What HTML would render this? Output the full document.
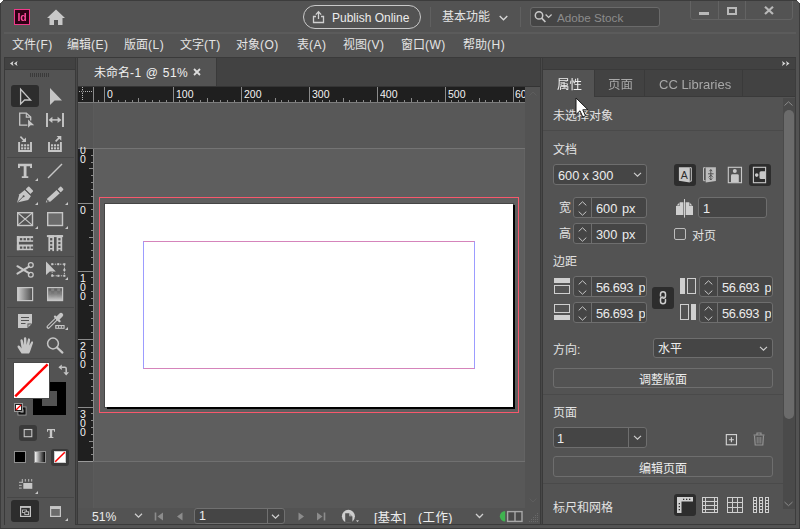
<!DOCTYPE html>
<html lang="zh-CN">
<head>
<meta charset="utf-8">
<title>Adobe InDesign</title>
<style>
html,body{margin:0;padding:0;background:#535353;}
body{width:800px;height:529px;overflow:hidden;position:relative;font-family:"Liberation Sans","Noto Sans CJK SC",sans-serif;}
#app{position:absolute;left:0;top:0;width:800px;height:529px;overflow:hidden;}
#app div,#app svg{position:absolute;box-sizing:border-box;}
#app svg{overflow:visible;display:block;}
.t{white-space:nowrap;}
</style>
</head>
<body>
<div id="app">
<div style="left:0px;top:0px;width:800px;height:529px;background:#3c3c3c;"></div>
<div style="left:1px;top:1px;width:798px;height:527px;background:#535353;"></div>
<div style="left:4px;top:32px;width:792px;height:2px;background:#5b5b5b;"></div>
<div style="left:4px;top:57px;width:792px;height:1px;background:#3a3a3a;"></div>
<div style="left:14px;top:9px;width:16px;height:16px;background:#2e0014;border:1px solid #f0388a;"></div>
<div class="t" style="left:14px;top:9px;font-size:10.5px;line-height:16px;height:16px;color:#ff4a9c;width:16px;text-align:center;font-weight:bold;letter-spacing:-0.2px;will-change:transform;">Id</div>
<svg style="left:46px;top:9px;" width="20" height="17" viewBox="0 0 20 17"><path d="M10 0.5 L19 9 H16.5 V16 H12 V11 H8 V16 H3.5 V9 H1 Z" fill="#c8c8c8"/></svg>
<div style="left:303px;top:5px;width:118px;height:24px;border:1px solid #c9c9c9;border-radius:12px;"></div>
<svg style="left:312px;top:10px;" width="14" height="14" viewBox="0 0 14 14"><path d="M4 6.5H1.5V12.5H11.5V6.5H9" fill="none" stroke="#d0d0d0" stroke-width="1.3"/><path d="M6.5 9V2.2M3.8 4.6L6.5 1.8L9.2 4.6" fill="none" stroke="#d0d0d0" stroke-width="1.3"/></svg>
<div class="t" style="left:332px;top:10px;font-size:12px;line-height:16px;height:16px;color:#ececec;">Publish Online</div>
<div style="left:430px;top:7px;width:1px;height:20px;background:#606060;"></div>
<div style="left:520px;top:7px;width:1px;height:20px;background:#606060;"></div>
<div class="t" style="left:442px;top:9px;font-size:12px;line-height:16px;height:16px;color:#e4e4e4;">基本功能</div>
<svg style="left:499px;top:15px;" width="9" height="6" viewBox="0 0 9 6"><path d="M0.7 1L4.5 4.8L8.3 1" fill="none" stroke="#d8d8d8" stroke-width="1.3"/></svg>
<div style="left:530px;top:7px;width:130px;height:20px;background:#454545;border:1px solid #6a6a6a;border-radius:3px;"></div>
<svg style="left:534px;top:10px;" width="20" height="14" viewBox="0 0 20 14"><circle cx="5" cy="5.4" r="3.7" fill="none" stroke="#c8c8c8" stroke-width="1.5"/><path d="M7.7 8.2L11.4 12" stroke="#c8c8c8" stroke-width="1.7"/><path d="M11.6 4.6L14.6 7.4L17.6 4.6" fill="none" stroke="#c8c8c8" stroke-width="1.3"/></svg>
<div class="t" style="left:557px;top:10px;font-size:11.7px;line-height:16px;height:16px;color:#8c8c8c;">Adobe Stock</div>
<div style="left:690px;top:-3px;width:103px;height:23px;border:1px solid #636363;border-radius:3px;"></div>
<div style="left:718px;top:1px;width:1px;height:18px;background:#636363;"></div>
<div style="left:745px;top:1px;width:1px;height:18px;background:#636363;"></div>
<div style="left:699px;top:12px;width:10px;height:3px;background:#b8b8b8;"></div>
<div style="left:727px;top:7px;width:10px;height:8px;border:2px solid #b8b8b8;"></div>
<svg style="left:764px;top:6px;" width="10" height="9" viewBox="0 0 10 9"><path d="M1 0.7L9 8M9 0.7L1 8" stroke="#b8b8b8" stroke-width="2.2"/></svg>
<div class="t" style="left:12px;top:37px;font-size:12px;line-height:16px;height:16px;color:#e4e4e4;">文件<span style="letter-spacing:0.5px">(F)</span></div>
<div class="t" style="left:67px;top:37px;font-size:12px;line-height:16px;height:16px;color:#e4e4e4;">编辑<span style="letter-spacing:0.5px">(E)</span></div>
<div class="t" style="left:124px;top:37px;font-size:12px;line-height:16px;height:16px;color:#e4e4e4;">版面<span style="letter-spacing:0.5px">(L)</span></div>
<div class="t" style="left:180px;top:37px;font-size:12px;line-height:16px;height:16px;color:#e4e4e4;">文字<span style="letter-spacing:0.5px">(T)</span></div>
<div class="t" style="left:236px;top:37px;font-size:12px;line-height:16px;height:16px;color:#e4e4e4;">对象<span style="letter-spacing:0.5px">(O)</span></div>
<div class="t" style="left:297px;top:37px;font-size:12px;line-height:16px;height:16px;color:#e4e4e4;">表<span style="letter-spacing:0.5px">(A)</span></div>
<div class="t" style="left:343px;top:37px;font-size:12px;line-height:16px;height:16px;color:#e4e4e4;">视图<span style="letter-spacing:0.5px">(V)</span></div>
<div class="t" style="left:401px;top:37px;font-size:12px;line-height:16px;height:16px;color:#e4e4e4;">窗口<span style="letter-spacing:0.5px">(W)</span></div>
<div class="t" style="left:463px;top:37px;font-size:12px;line-height:16px;height:16px;color:#e4e4e4;">帮助<span style="letter-spacing:0.5px">(H)</span></div>
<div style="left:0px;top:0px;width:800px;height:1px;background:#3c3c3c;"></div>
<div style="left:75px;top:58px;width:3px;height:466px;background:#3a3a3a;"></div>
<div style="left:76px;top:58px;width:1px;height:466px;background:#484848;"></div>
<div style="left:540px;top:58px;width:3px;height:466px;background:#3a3a3a;"></div>
<div style="left:541px;top:58px;width:1px;height:466px;background:#484848;"></div>
<div style="left:78px;top:58px;width:462px;height:29px;background:#424242;"></div>
<div style="left:78px;top:58px;width:138px;height:29px;background:#535353;"></div>
<div class="t" style="left:94px;top:65px;font-size:12px;line-height:16px;height:16px;color:#f0f0f0;">未命名<span style="letter-spacing:0.45px;word-spacing:0.5px">-1 @ 51%</span></div>
<svg style="left:193px;top:68px;" width="8" height="8" viewBox="0 0 8 8"><path d="M1 1L7 7M7 1L1 7" stroke="#dcdcdc" stroke-width="1.8"/></svg>
<div style="left:78px;top:87px;width:462px;height:421px;background:#5e5e5e;"></div>
<div style="left:78px;top:103px;width:447px;height:45px;background:#585858;"></div>
<div style="left:78px;top:103px;width:15px;height:45px;background:#555555;"></div>
<div style="left:93px;top:103px;width:1px;height:45px;background:#5b5b5b;"></div>
<div style="left:524px;top:149px;width:1px;height:312px;background:#636363;"></div>
<div style="left:78px;top:462px;width:447px;height:46px;background:#585858;"></div>
<div style="left:78px;top:462px;width:15px;height:46px;background:#555555;"></div>
<div style="left:93px;top:462px;width:1px;height:46px;background:#5b5b5b;"></div>
<div style="left:78px;top:86px;width:462px;height:1px;background:#343434;"></div>
<div style="left:216px;top:58px;width:1px;height:28px;background:#3a3a3a;"></div>
<div style="left:78px;top:87px;width:447px;height:15px;background:#1f1f1f;"></div>
<div style="left:78px;top:102px;width:447px;height:1px;background:#7d7d7d;"></div>
<div style="left:93px;top:87px;width:1px;height:15px;background:#8a8a8a;"></div>
<svg style="left:78px;top:87px;" width="15" height="15" viewBox="0 0 15 15"><path d="M1 4.5H14" stroke="#b5b5b5" stroke-width="1" stroke-dasharray="1 1"/><path d="M4.5 0V14" stroke="#b5b5b5" stroke-width="1" stroke-dasharray="1 1"/><path d="M3.5 4.5L4.5 3.5L5.5 4.5L4.5 5.5Z" fill="#1f1f1f" stroke="#9a9a9a" stroke-width="0.6"/></svg>
<svg style="left:78px;top:87px;" width="447" height="15" viewBox="0 0 447 15"><rect x="20" y="13" width="1" height="2" fill="#8a8a8a"/><rect x="26" y="0" width="1" height="15" fill="#8a8a8a"/><rect x="33" y="13" width="1" height="2" fill="#8a8a8a"/><rect x="40" y="13" width="1" height="2" fill="#8a8a8a"/><rect x="47" y="13" width="1" height="2" fill="#8a8a8a"/><rect x="54" y="13" width="1" height="2" fill="#8a8a8a"/><rect x="60" y="11" width="1" height="4" fill="#8a8a8a"/><rect x="67" y="13" width="1" height="2" fill="#8a8a8a"/><rect x="74" y="13" width="1" height="2" fill="#8a8a8a"/><rect x="81" y="13" width="1" height="2" fill="#8a8a8a"/><rect x="88" y="13" width="1" height="2" fill="#8a8a8a"/><rect x="95" y="0" width="1" height="15" fill="#8a8a8a"/><rect x="101" y="13" width="1" height="2" fill="#8a8a8a"/><rect x="108" y="13" width="1" height="2" fill="#8a8a8a"/><rect x="115" y="13" width="1" height="2" fill="#8a8a8a"/><rect x="122" y="13" width="1" height="2" fill="#8a8a8a"/><rect x="129" y="11" width="1" height="4" fill="#8a8a8a"/><rect x="135" y="13" width="1" height="2" fill="#8a8a8a"/><rect x="142" y="13" width="1" height="2" fill="#8a8a8a"/><rect x="149" y="13" width="1" height="2" fill="#8a8a8a"/><rect x="156" y="13" width="1" height="2" fill="#8a8a8a"/><rect x="163" y="0" width="1" height="15" fill="#8a8a8a"/><rect x="169" y="13" width="1" height="2" fill="#8a8a8a"/><rect x="176" y="13" width="1" height="2" fill="#8a8a8a"/><rect x="183" y="13" width="1" height="2" fill="#8a8a8a"/><rect x="190" y="13" width="1" height="2" fill="#8a8a8a"/><rect x="197" y="11" width="1" height="4" fill="#8a8a8a"/><rect x="203" y="13" width="1" height="2" fill="#8a8a8a"/><rect x="210" y="13" width="1" height="2" fill="#8a8a8a"/><rect x="217" y="13" width="1" height="2" fill="#8a8a8a"/><rect x="224" y="13" width="1" height="2" fill="#8a8a8a"/><rect x="231" y="0" width="1" height="15" fill="#8a8a8a"/><rect x="237" y="13" width="1" height="2" fill="#8a8a8a"/><rect x="244" y="13" width="1" height="2" fill="#8a8a8a"/><rect x="251" y="13" width="1" height="2" fill="#8a8a8a"/><rect x="258" y="13" width="1" height="2" fill="#8a8a8a"/><rect x="265" y="11" width="1" height="4" fill="#8a8a8a"/><rect x="271" y="13" width="1" height="2" fill="#8a8a8a"/><rect x="278" y="13" width="1" height="2" fill="#8a8a8a"/><rect x="285" y="13" width="1" height="2" fill="#8a8a8a"/><rect x="292" y="13" width="1" height="2" fill="#8a8a8a"/><rect x="299" y="0" width="1" height="15" fill="#8a8a8a"/><rect x="305" y="13" width="1" height="2" fill="#8a8a8a"/><rect x="312" y="13" width="1" height="2" fill="#8a8a8a"/><rect x="319" y="13" width="1" height="2" fill="#8a8a8a"/><rect x="326" y="13" width="1" height="2" fill="#8a8a8a"/><rect x="333" y="11" width="1" height="4" fill="#8a8a8a"/><rect x="339" y="13" width="1" height="2" fill="#8a8a8a"/><rect x="346" y="13" width="1" height="2" fill="#8a8a8a"/><rect x="353" y="13" width="1" height="2" fill="#8a8a8a"/><rect x="360" y="13" width="1" height="2" fill="#8a8a8a"/><rect x="367" y="0" width="1" height="15" fill="#8a8a8a"/><rect x="373" y="13" width="1" height="2" fill="#8a8a8a"/><rect x="380" y="13" width="1" height="2" fill="#8a8a8a"/><rect x="387" y="13" width="1" height="2" fill="#8a8a8a"/><rect x="394" y="13" width="1" height="2" fill="#8a8a8a"/><rect x="401" y="11" width="1" height="4" fill="#8a8a8a"/><rect x="407" y="13" width="1" height="2" fill="#8a8a8a"/><rect x="414" y="13" width="1" height="2" fill="#8a8a8a"/><rect x="421" y="13" width="1" height="2" fill="#8a8a8a"/><rect x="428" y="13" width="1" height="2" fill="#8a8a8a"/><rect x="435" y="0" width="1" height="15" fill="#8a8a8a"/><rect x="441" y="13" width="1" height="2" fill="#8a8a8a"/></svg>
<div class="t" style="left:107px;top:88px;font-size:10.5px;line-height:13px;height:13px;color:#f2f2f2;overflow:hidden;width:20px;">0</div>
<div class="t" style="left:176px;top:88px;font-size:10.5px;line-height:13px;height:13px;color:#f2f2f2;overflow:hidden;width:20px;">100</div>
<div class="t" style="left:244px;top:88px;font-size:10.5px;line-height:13px;height:13px;color:#f2f2f2;overflow:hidden;width:20px;">200</div>
<div class="t" style="left:312px;top:88px;font-size:10.5px;line-height:13px;height:13px;color:#f2f2f2;overflow:hidden;width:20px;">300</div>
<div class="t" style="left:380px;top:88px;font-size:10.5px;line-height:13px;height:13px;color:#f2f2f2;overflow:hidden;width:20px;">400</div>
<div class="t" style="left:448px;top:88px;font-size:10.5px;line-height:13px;height:13px;color:#f2f2f2;overflow:hidden;width:20px;">500</div>
<div class="t" style="left:515px;top:88px;font-size:10.5px;line-height:13px;height:13px;color:#f2f2f2;overflow:hidden;width:10px;">600</div>
<div style="left:78px;top:148px;width:447px;height:1px;background:#747474;"></div>
<div style="left:78px;top:461px;width:447px;height:1px;background:#707070;"></div>
<div style="left:78px;top:461px;width:15px;height:1px;background:#9a9a9a;"></div>
<div style="left:78px;top:149px;width:15px;height:312px;background:#1f1f1f;"></div>
<div style="left:93px;top:149px;width:1px;height:312px;background:#8a8a8a;"></div>
<svg style="left:78px;top:149px;" width="15" height="312" viewBox="0 0 15 312"><rect x="13" y="6" width="2" height="1" fill="#8a8a8a"/><rect x="13" y="13" width="2" height="1" fill="#8a8a8a"/><rect x="11" y="19" width="4" height="1" fill="#8a8a8a"/><rect x="13" y="26" width="2" height="1" fill="#8a8a8a"/><rect x="13" y="33" width="2" height="1" fill="#8a8a8a"/><rect x="13" y="40" width="2" height="1" fill="#8a8a8a"/><rect x="13" y="47" width="2" height="1" fill="#8a8a8a"/><rect x="0" y="54" width="15" height="1" fill="#8a8a8a"/><rect x="13" y="60" width="2" height="1" fill="#8a8a8a"/><rect x="13" y="67" width="2" height="1" fill="#8a8a8a"/><rect x="13" y="74" width="2" height="1" fill="#8a8a8a"/><rect x="13" y="81" width="2" height="1" fill="#8a8a8a"/><rect x="11" y="88" width="4" height="1" fill="#8a8a8a"/><rect x="13" y="94" width="2" height="1" fill="#8a8a8a"/><rect x="13" y="101" width="2" height="1" fill="#8a8a8a"/><rect x="13" y="108" width="2" height="1" fill="#8a8a8a"/><rect x="13" y="115" width="2" height="1" fill="#8a8a8a"/><rect x="0" y="122" width="15" height="1" fill="#8a8a8a"/><rect x="13" y="128" width="2" height="1" fill="#8a8a8a"/><rect x="13" y="135" width="2" height="1" fill="#8a8a8a"/><rect x="13" y="142" width="2" height="1" fill="#8a8a8a"/><rect x="13" y="149" width="2" height="1" fill="#8a8a8a"/><rect x="11" y="156" width="4" height="1" fill="#8a8a8a"/><rect x="13" y="162" width="2" height="1" fill="#8a8a8a"/><rect x="13" y="169" width="2" height="1" fill="#8a8a8a"/><rect x="13" y="176" width="2" height="1" fill="#8a8a8a"/><rect x="13" y="183" width="2" height="1" fill="#8a8a8a"/><rect x="0" y="190" width="15" height="1" fill="#8a8a8a"/><rect x="13" y="196" width="2" height="1" fill="#8a8a8a"/><rect x="13" y="203" width="2" height="1" fill="#8a8a8a"/><rect x="13" y="210" width="2" height="1" fill="#8a8a8a"/><rect x="13" y="217" width="2" height="1" fill="#8a8a8a"/><rect x="11" y="224" width="4" height="1" fill="#8a8a8a"/><rect x="13" y="230" width="2" height="1" fill="#8a8a8a"/><rect x="13" y="237" width="2" height="1" fill="#8a8a8a"/><rect x="13" y="244" width="2" height="1" fill="#8a8a8a"/><rect x="13" y="251" width="2" height="1" fill="#8a8a8a"/><rect x="0" y="258" width="15" height="1" fill="#8a8a8a"/><rect x="13" y="264" width="2" height="1" fill="#8a8a8a"/><rect x="13" y="271" width="2" height="1" fill="#8a8a8a"/><rect x="13" y="278" width="2" height="1" fill="#8a8a8a"/><rect x="13" y="285" width="2" height="1" fill="#8a8a8a"/><rect x="11" y="292" width="4" height="1" fill="#8a8a8a"/><rect x="13" y="298" width="2" height="1" fill="#8a8a8a"/><rect x="13" y="305" width="2" height="1" fill="#8a8a8a"/></svg>
<div style="left:78px;top:147px;width:15px;height:314px;overflow:hidden;"><div class="t" style="left:2px;top:-10px;font-size:10.5px;line-height:9px;height:9px;color:#f2f2f2;">1</div><div class="t" style="left:2px;top:-1px;font-size:10.5px;line-height:9px;height:9px;color:#f2f2f2;">0</div><div class="t" style="left:2px;top:8px;font-size:10.5px;line-height:9px;height:9px;color:#f2f2f2;">0</div><div class="t" style="left:2px;top:59px;font-size:10.5px;line-height:9px;height:9px;color:#f2f2f2;">0</div><div class="t" style="left:2px;top:127px;font-size:10.5px;line-height:9px;height:9px;color:#f2f2f2;">1</div><div class="t" style="left:2px;top:136px;font-size:10.5px;line-height:9px;height:9px;color:#f2f2f2;">0</div><div class="t" style="left:2px;top:145px;font-size:10.5px;line-height:9px;height:9px;color:#f2f2f2;">0</div><div class="t" style="left:2px;top:195px;font-size:10.5px;line-height:9px;height:9px;color:#f2f2f2;">2</div><div class="t" style="left:2px;top:204px;font-size:10.5px;line-height:9px;height:9px;color:#f2f2f2;">0</div><div class="t" style="left:2px;top:213px;font-size:10.5px;line-height:9px;height:9px;color:#f2f2f2;">0</div><div class="t" style="left:2px;top:263px;font-size:10.5px;line-height:9px;height:9px;color:#f2f2f2;">3</div><div class="t" style="left:2px;top:272px;font-size:10.5px;line-height:9px;height:9px;color:#f2f2f2;">0</div><div class="t" style="left:2px;top:281px;font-size:10.5px;line-height:9px;height:9px;color:#f2f2f2;">0</div></div>
<div style="left:525px;top:87px;width:15px;height:421px;background:#535353;"></div>
<svg style="left:529px;top:91px;" width="8" height="5" viewBox="0 0 8 5"><path d="M0.5 4.5L4 1L7.5 4.5" fill="none" stroke="#5d5d5d" stroke-width="1"/></svg>
<svg style="left:529px;top:498px;" width="8" height="5" viewBox="0 0 8 5"><path d="M0.5 0.5L4 4L7.5 0.5" fill="none" stroke="#5d5d5d" stroke-width="1"/></svg>
<div style="left:99px;top:197px;width:420px;height:216px;border:1px solid #f8586c;"></div>
<div style="left:104px;top:203px;width:410px;height:205px;background:#454545;"></div>
<div style="left:513px;top:205px;width:2px;height:204px;background:#000;"></div>
<div style="left:107px;top:407px;width:408px;height:2px;background:#000;"></div>
<div style="left:105px;top:204px;width:408px;height:203px;background:#fff;"></div>
<div style="left:143px;top:241px;width:332px;height:128px;border-top:1px solid #d584bb;border-bottom:1px solid #d584bb;border-left:1px solid #9c9cff;border-right:1px solid #9c9cff;"></div>
<div style="left:78px;top:508px;width:462px;height:16px;background:#535353;"></div>
<div class="t" style="left:92px;top:509px;font-size:12.2px;line-height:16px;height:16px;color:#ececec;">51%</div>
<svg style="left:134px;top:513px;" width="9" height="6" viewBox="0 0 9 6"><path d="M1 0.8L4.5 4.2L8 0.8" fill="none" stroke="#d0d0d0" stroke-width="1.2"/></svg>
<svg style="left:155px;top:512px;" width="10" height="9" viewBox="0 0 10 9"><path d="M0.5 0.5V8.5" stroke="#8c8c8c" stroke-width="1.6"/><path d="M8 0.5V8.5L2.5 4.5Z" fill="#8c8c8c"/></svg>
<svg style="left:176px;top:512px;" width="8" height="9" viewBox="0 0 8 9"><path d="M6.5 0.5V8.5L1 4.5Z" fill="#8c8c8c"/></svg>
<div style="left:194px;top:508px;width:91px;height:16px;background:#454545;border:1px solid #707070;border-radius:3px;"></div>
<div style="left:267px;top:509px;width:1px;height:14px;background:#707070;"></div>
<div class="t" style="left:199px;top:509px;font-size:12.5px;line-height:15px;height:15px;color:#ececec;">1</div>
<svg style="left:271px;top:514px;" width="9" height="6" viewBox="0 0 9 6"><path d="M1 0.8L4.5 4.2L8 0.8" fill="none" stroke="#d0d0d0" stroke-width="1.2"/></svg>
<svg style="left:297px;top:512px;" width="8" height="9" viewBox="0 0 8 9"><path d="M1.5 0.5V8.5L7 4.5Z" fill="#8c8c8c"/></svg>
<svg style="left:315px;top:512px;" width="10" height="9" viewBox="0 0 10 9"><path d="M9.5 0.5V8.5" stroke="#8c8c8c" stroke-width="1.6"/><path d="M2 0.5V8.5L7.5 4.5Z" fill="#8c8c8c"/></svg>
<svg style="left:340px;top:508px;" width="20" height="16" viewBox="340 508 20 16"><clipPath id="pfc"><rect x="340" y="508" width="20" height="14.3"/></clipPath><g clip-path="url(#pfc)"><circle cx="348.4" cy="516.3" r="6.5" fill="#cdcdcd"/><path d="M345.2 513.2H349L352.4 516.6V523H345.2Z" fill="#535353"/><path d="M349.3 513.6V516.3H352Z" fill="#cdcdcd"/><path d="M349.9 514.8V515.8H350.9Z" fill="#535353"/></g><path d="M356 520.2H359L357.5 522.2Z" fill="#c0c0c0"/></svg>
<div class="t" style="left:374px;top:509.5px;font-size:12.5px;line-height:16px;height:16px;color:#ececec;">[基本]</div>
<div class="t" style="left:418px;top:509.5px;font-size:12.5px;line-height:16px;height:16px;color:#ececec;letter-spacing:0.4px;">(工作)</div>
<svg style="left:475px;top:513px;" width="9" height="6" viewBox="0 0 9 6"><path d="M1 1L4.5 4.5L8 1" fill="none" stroke="#d0d0d0" stroke-width="1.3"/></svg>
<svg style="left:499px;top:509px;" width="25" height="15" viewBox="499 509 25 15"><path d="M505.2 510.9A5.3 5.3 0 0 0 505.2 521.6Z" fill="#3fb34f"/><rect x="507.6" y="511.6" width="14.4" height="9.8" fill="#4a4a4a" stroke="#a8a8a8" stroke-width="1.4"/><path d="M515 511.6V521.4" stroke="#a8a8a8" stroke-width="1.4"/></svg>
<svg style="left:528px;top:512px;" width="12" height="12" viewBox="0 0 12 12"><g fill="#6a6a6a"><rect x="9" y="1" width="1" height="1"/><rect x="7" y="3" width="1" height="1"/><rect x="9" y="3" width="1" height="1"/><rect x="5" y="5" width="1" height="1"/><rect x="7" y="5" width="1" height="1"/><rect x="9" y="5" width="1" height="1"/><rect x="3" y="7" width="1" height="1"/><rect x="5" y="7" width="1" height="1"/><rect x="7" y="7" width="1" height="1"/><rect x="9" y="7" width="1" height="1"/><rect x="1" y="9" width="1" height="1"/><rect x="3" y="9" width="1" height="1"/><rect x="5" y="9" width="1" height="1"/><rect x="7" y="9" width="1" height="1"/><rect x="9" y="9" width="1" height="1"/></g></svg>
<div style="left:75px;top:524px;width:721px;height:1px;background:#3a3a3a;"></div>
<div style="left:4px;top:58px;width:1px;height:467px;background:#3a3a3a;"></div>
<div style="left:5px;top:58px;width:70px;height:467px;background:#535353;"></div>
<div style="left:5px;top:58px;width:70px;height:11px;background:#424242;"></div>
<div style="left:5px;top:69px;width:70px;height:1px;background:#3a3a3a;"></div>
<svg style="left:10px;top:61px;" width="8" height="5" viewBox="0 0 8 5"><path d="M3.5 0L0 2.5L3.5 5L2.7 2.5ZM7.5 0L4 2.5L7.5 5L6.7 2.5Z" fill="#d8d8d8"/></svg>
<svg style="left:30px;top:73px;" width="20" height="4" viewBox="0 0 20 4"><rect x="0" y="0" width="1" height="4" fill="#3a3a3a"/><rect x="2" y="0" width="1" height="4" fill="#3a3a3a"/><rect x="4" y="0" width="1" height="4" fill="#3a3a3a"/><rect x="6" y="0" width="1" height="4" fill="#3a3a3a"/><rect x="8" y="0" width="1" height="4" fill="#3a3a3a"/><rect x="10" y="0" width="1" height="4" fill="#3a3a3a"/><rect x="12" y="0" width="1" height="4" fill="#3a3a3a"/><rect x="14" y="0" width="1" height="4" fill="#3a3a3a"/><rect x="16" y="0" width="1" height="4" fill="#3a3a3a"/><rect x="18" y="0" width="1" height="4" fill="#3a3a3a"/></svg>
<div style="left:7px;top:157px;width:67px;height:1px;background:#474747;"></div>
<div style="left:7px;top:256px;width:67px;height:1px;background:#474747;"></div>
<div style="left:7px;top:307px;width:67px;height:1px;background:#474747;"></div>
<div style="left:7px;top:358px;width:67px;height:1px;background:#474747;"></div>
<div style="left:7px;top:497px;width:67px;height:1px;background:#474747;"></div>
<div style="left:11px;top:85px;width:28px;height:22px;background:#2d2d2d;border-radius:3px;"></div>
<svg style="left:19px;top:87px;" width="14" height="19" viewBox="0 0 14 19"><path d="M1.6 2.2V17L5.6 13H11.6Z" fill="none" stroke="#c6c6c6" stroke-width="1.3" stroke-linejoin="miter"/></svg>
<svg style="left:49px;top:87px;" width="14" height="19" viewBox="0 0 14 19"><path d="M1 1V18L5.6 13.4H13Z" fill="#c6c6c6"/></svg>
<svg style="left:18px;top:111px;" width="18" height="18" viewBox="18 111 18 18"><path d="M27.4 125.1H19.7V113.1H26.3L30.7 117.1V120.4" fill="none" stroke="#c6c6c6" stroke-width="1.3"/><path d="M26.3 113.1V117.1H30.7" fill="none" stroke="#c6c6c6" stroke-width="1.1"/><path d="M28.1 119.4V127.7L30.5 125.3H34.2Z" fill="#c6c6c6"/></svg>
<svg style="left:45px;top:112px;" width="20" height="16" viewBox="45 112 20 16"><path d="M47 113V127M63 113V127" stroke="#c6c6c6" stroke-width="1.9"/><path d="M50.5 119.9H59.5" stroke="#c6c6c6" stroke-width="1.5"/><path d="M48.6 119.9L52.4 116.7V123.1ZM61.4 119.9L57.6 116.7V123.1Z" fill="#c6c6c6"/></svg>
<svg style="left:17px;top:135px;" width="18" height="18" viewBox="17 135 18 18"><path d="M19.1 142V151H31.0V142" fill="none" stroke="#c6c6c6" stroke-width="1.9"/><g fill="#c6c6c6"><rect x="21.1" y="144.3" width="2.1" height="2.1"/><rect x="21.1" y="147.3" width="2.1" height="2.1"/><rect x="24.1" y="144.3" width="2.1" height="2.1"/><rect x="24.1" y="147.3" width="2.1" height="2.1"/><rect x="27.1" y="144.3" width="2.1" height="2.1"/><rect x="27.1" y="147.3" width="2.1" height="2.1"/></g><path d="M20.4 136.6L24 140.2" stroke="#c6c6c6" stroke-width="1.6"/><path d="M26 137.4V142H21.4Z" fill="#c6c6c6"/></svg>
<svg style="left:47px;top:135px;" width="18" height="18" viewBox="47 135 18 18"><path d="M49 142V151H60.9V142" fill="none" stroke="#c6c6c6" stroke-width="1.9"/><g fill="#c6c6c6"><rect x="51" y="144.3" width="2.1" height="2.1"/><rect x="51" y="147.3" width="2.1" height="2.1"/><rect x="54" y="144.3" width="2.1" height="2.1"/><rect x="54" y="147.3" width="2.1" height="2.1"/><rect x="57" y="144.3" width="2.1" height="2.1"/><rect x="57" y="147.3" width="2.1" height="2.1"/></g><path d="M55.6 141.4L59.6 137.4" stroke="#c6c6c6" stroke-width="1.6"/><path d="M56.6 136H61.3V140.7Z" fill="#c6c6c6"/></svg>
<svg style="left:16px;top:162px;" width="20" height="18" viewBox="16 162 20 18"><path d="M18 163.8H32V168H30.1V166.2H26.5V176.3H28.3V177.9H21.8V176.3H23.7V166.2H19.9V168H18Z" fill="#c6c6c6"/></svg>
<svg style="left:35px;top:178px;" width="3" height="3" viewBox="0 0 3 3"><path d="M3 0V3H0Z" fill="#c6c6c6"/></svg>
<svg style="left:47px;top:163px;" width="16" height="16" viewBox="0 0 16 16"><path d="M1 15L15 1" stroke="#c6c6c6" stroke-width="1.5"/></svg>
<svg style="left:16px;top:186px;" width="18" height="18" viewBox="16 186 18 18"><path d="M17.1 202.6L19.4 194.2L24.8 189.9L31 196L28.2 200Z" fill="#c6c6c6"/><path d="M25.6 189.2L28.1 186.7Q28.7 186.3 29.3 186.8L32.9 190.4Q33.4 191 32.9 191.6L30.4 194Z" fill="#c6c6c6"/><path d="M24.3 188.9L31.2 195.8" stroke="#535353" stroke-width="0.9"/><path d="M17.6 202.1L23.2 196.6" stroke="#535353" stroke-width="0.9"/><circle cx="23.6" cy="196.2" r="1" fill="#535353"/></svg>
<svg style="left:35px;top:202px;" width="3" height="3" viewBox="0 0 3 3"><path d="M3 0V3H0Z" fill="#c6c6c6"/></svg>
<svg style="left:45px;top:186px;" width="19" height="18" viewBox="45 186 19 18"><path d="M45.8 202.6L47.6 198.2L56.6 189.9L59.8 193.2L50.6 201.6Z" fill="#c6c6c6"/><path d="M57.6 189.2L60.1 186.7Q60.7 186.3 61.3 186.8L63.1 188.7Q63.6 189.3 63.1 189.9L60.6 192.4Z" fill="#c6c6c6"/><path d="M56.5 189L60.8 193.3" stroke="#535353" stroke-width="0.9"/><path d="M47.4 199.4L49.5 201.4L47 201.9Z" fill="#535353"/></svg>
<svg style="left:65px;top:202px;" width="3" height="3" viewBox="0 0 3 3"><path d="M3 0V3H0Z" fill="#c6c6c6"/></svg>
<svg style="left:17px;top:212px;" width="16" height="14" viewBox="0 0 16 14"><rect x="0.7" y="0.7" width="14.8" height="12.8" fill="none" stroke="#c6c6c6" stroke-width="1.4"/><path d="M1 1L15.2 13.2M15.2 1L1 13.2" stroke="#c6c6c6" stroke-width="1.1"/></svg>
<svg style="left:35px;top:226px;" width="3" height="3" viewBox="0 0 3 3"><path d="M3 0V3H0Z" fill="#c6c6c6"/></svg>
<svg style="left:47px;top:212px;" width="16" height="14" viewBox="0 0 16 14"><rect x="0.7" y="0.7" width="14.8" height="12.8" fill="#6b6b6b" stroke="#c6c6c6" stroke-width="1.4"/></svg>
<svg style="left:65px;top:226px;" width="3" height="3" viewBox="0 0 3 3"><path d="M3 0V3H0Z" fill="#c6c6c6"/></svg>
<svg style="left:16px;top:235px;" width="18" height="17" viewBox="16 235 18 17"><rect x="16.9" y="236.1" width="2" height="14.1" fill="#c6c6c6"/><rect x="16.9" y="236.1" width="16.2" height="5.7" fill="#c6c6c6"/><rect x="19.9" y="238.1" width="2.4" height="2.2" fill="#535353"/><rect x="23.5" y="238.1" width="2.4" height="2.2" fill="#535353"/><rect x="27.1" y="238.1" width="2.4" height="2.2" fill="#535353"/><rect x="30.7" y="238.1" width="2.4" height="2.2" fill="#535353"/><rect x="16.9" y="244.5" width="16.2" height="5.7" fill="#c6c6c6"/><rect x="19.9" y="246.5" width="2.4" height="2.2" fill="#535353"/><rect x="23.5" y="246.5" width="2.4" height="2.2" fill="#535353"/><rect x="27.1" y="246.5" width="2.4" height="2.2" fill="#535353"/><rect x="30.7" y="246.5" width="2.4" height="2.2" fill="#535353"/></svg>
<svg style="left:46px;top:234px;" width="18" height="18" viewBox="46 234 18 18"><rect x="46.9" y="235.1" width="16.2" height="2" fill="#c6c6c6"/><rect x="48.4" y="235.1" width="5.6" height="16" fill="#c6c6c6"/><rect x="50.1" y="238.1" width="2.2" height="2.3" fill="#535353"/><rect x="50.1" y="241.9" width="2.2" height="2.3" fill="#535353"/><rect x="50.1" y="245.7" width="2.2" height="2.3" fill="#535353"/><rect x="50.1" y="249.5" width="2.2" height="2.3" fill="#535353"/><rect x="56.6" y="235.1" width="5.6" height="16" fill="#c6c6c6"/><rect x="58.300000000000004" y="238.1" width="2.2" height="2.3" fill="#535353"/><rect x="58.300000000000004" y="241.9" width="2.2" height="2.3" fill="#535353"/><rect x="58.300000000000004" y="245.7" width="2.2" height="2.3" fill="#535353"/><rect x="58.300000000000004" y="249.5" width="2.2" height="2.3" fill="#535353"/></svg>
<svg style="left:16px;top:261px;" width="19" height="18" viewBox="16 261 19 18"><circle cx="30.8" cy="265.1" r="2.4" fill="none" stroke="#c6c6c6" stroke-width="1.3"/><circle cx="30.8" cy="274.7" r="2.4" fill="none" stroke="#c6c6c6" stroke-width="1.3"/><path d="M29 266.6L17.4 273.6M29 273.2L17.4 266.2" stroke="#c6c6c6" stroke-width="2" stroke-linecap="round"/></svg>
<svg style="left:45px;top:260px;" width="22" height="18" viewBox="45 260 22 18"><path d="M46 261.4V275L49.8 271.4H55.8Z" fill="#c6c6c6"/><path d="M52.2 264.2H64.4V275.8H52.2V272" fill="none" stroke="#c6c6c6" stroke-width="1" stroke-dasharray="1.4 1.2"/><rect x="51.2" y="263.2" width="2" height="2" fill="#c6c6c6"/><rect x="57.3" y="263.2" width="2" height="2" fill="#c6c6c6"/><rect x="63.400000000000006" y="263.2" width="2" height="2" fill="#c6c6c6"/><rect x="63.400000000000006" y="269" width="2" height="2" fill="#c6c6c6"/><rect x="63.400000000000006" y="274.8" width="2" height="2" fill="#c6c6c6"/><rect x="57.3" y="274.8" width="2" height="2" fill="#c6c6c6"/><rect x="51.2" y="274.8" width="2" height="2" fill="#c6c6c6"/></svg>
<svg style="left:65px;top:277px;" width="3" height="3" viewBox="0 0 3 3"><path d="M3 0V3H0Z" fill="#c6c6c6"/></svg>
<svg style="left:17px;top:287px;" width="16" height="14" viewBox="0 0 16 14"><defs><linearGradient id="g1" x1="0" y1="0" x2="1" y2="0"><stop offset="0" stop-color="#cfcfcf"/><stop offset="1" stop-color="#4a4a4a"/></linearGradient><linearGradient id="g2" x1="0" y1="0" x2="0" y2="1"><stop offset="0" stop-color="#585858"/><stop offset="0.45" stop-color="#7a7a7a"/><stop offset="1" stop-color="#cacaca"/></linearGradient><linearGradient id="g3" x1="0" y1="0" x2="1" y2="0"><stop offset="0" stop-color="#ffffff"/><stop offset="1" stop-color="#000000"/></linearGradient></defs><rect x="0.6" y="0.6" width="15" height="13" fill="url(#g1)" stroke="#c6c6c6" stroke-width="1.2"/></svg>
<svg style="left:47px;top:287px;" width="16" height="14" viewBox="0 0 16 14"><rect x="0.6" y="0.6" width="15" height="13" fill="url(#g2)" stroke="#c6c6c6" stroke-width="1.2"/><rect x="4.2" y="1.2" width="3" height="3" fill="#8a8a8a" opacity="0.75"/><rect x="10.2" y="1.2" width="3" height="3" fill="#8a8a8a" opacity="0.75"/><rect x="1.2" y="4.2" width="3" height="3" fill="#8a8a8a" opacity="0.47"/><rect x="7.2" y="4.2" width="3" height="3" fill="#8a8a8a" opacity="0.47"/><rect x="13.2" y="4.2" width="1.6" height="3" fill="#8a8a8a" opacity="0.47"/><rect x="4.2" y="7.2" width="3" height="3" fill="#8a8a8a" opacity="0.18999999999999995"/><rect x="10.2" y="7.2" width="3" height="3" fill="#8a8a8a" opacity="0.18999999999999995"/></svg>
<svg style="left:18px;top:314px;" width="14" height="14" viewBox="0 0 14 14"><path d="M0 0H14V9.5L9.5 14H0Z" fill="#c6c6c6"/><path d="M3 3.5H11M3 6.5H11M3 9.5H7.5" stroke="#535353" stroke-width="1.2"/><path d="M9.5 14V9.5H14Z" fill="#535353"/><path d="M10.4 13V10.4H13Z" fill="#c6c6c6"/></svg>
<svg style="left:45px;top:311px;" width="22" height="20" viewBox="45 311 22 20"><path d="M48.3 327L56.4 318.9" stroke="#c6c6c6" stroke-width="3.6" stroke-linecap="round"/><path d="M48.5 326.8L56.6 318.7" stroke="#535353" stroke-width="1.5" stroke-linecap="round"/><path d="M55 316.6L59.6 321.2" stroke="#c6c6c6" stroke-width="2.2" stroke-linecap="round"/><path d="M57.8 318.2L61 315" stroke="#c6c6c6" stroke-width="4.4" stroke-linecap="round"/><rect x="55.2" y="325" width="9.4" height="3.8" fill="#c6c6c6"/><g fill="#535353"><rect x="56.4" y="326.1" width="1.7" height="1.7"/><rect x="59.1" y="326.1" width="1.7" height="1.7"/><rect x="61.8" y="326.1" width="1.7" height="1.7"/></g></svg>
<svg style="left:65px;top:327px;" width="3" height="3" viewBox="0 0 3 3"><path d="M3 0V3H0Z" fill="#c6c6c6"/></svg>
<svg style="left:16.5px;top:337px;" width="17" height="17" viewBox="0 0 17 17"><path d="M4.6 16.5Q2.5 13.5 0.6 10.2Q0.2 8.9 1.3 8.6Q2.4 8.5 3.2 9.6L4.6 11.4L3.4 3.6Q3.3 2.3 4.4 2.2Q5.5 2.2 5.8 3.5L6.9 8L6.9 1.4Q7 0.2 8.1 0.2Q9.2 0.2 9.3 1.4L9.6 8L10.9 2.3Q11.2 1.2 12.2 1.4Q13.2 1.7 13.1 2.9L12.3 8.6L14.2 4.9Q14.8 4 15.6 4.4Q16.4 4.9 16 6L13.6 13Q13 15 12 16.5Z" fill="#c6c6c6"/></svg>
<svg style="left:46px;top:337px;" width="18" height="17" viewBox="0 0 18 17"><circle cx="7" cy="6.5" r="5.4" fill="none" stroke="#c6c6c6" stroke-width="1.5"/><path d="M11 10.5L16.4 15.6" stroke="#c6c6c6" stroke-width="2.2" stroke-linecap="round"/></svg>
<div style="left:33px;top:382px;width:33px;height:33px;background:#000;"></div>
<div style="left:42px;top:391px;width:15px;height:15px;background:#535353;"></div>
<div style="left:13px;top:362px;width:37px;height:37px;background:#4a4a4a;"></div>
<div style="left:14px;top:363px;width:35px;height:35px;background:#fff;"></div>
<svg style="left:14px;top:363px;" width="35" height="35" viewBox="0 0 35 35"><path d="M1.2 33.4L33.6 1.4" stroke="#ff0000" stroke-width="2.4"/></svg>
<svg style="left:58px;top:364px;" width="11" height="12" viewBox="0 0 11 12"><path d="M3.5 3.2H6.8Q8.2 3.2 8.2 4.6V8.6" fill="none" stroke="#c6c6c6" stroke-width="1.5"/><path d="M0.4 3.2L3.8 0.4V6Z M8.2 11.6L5.4 8.2H11Z" fill="#c6c6c6"/></svg>
<svg style="left:14px;top:403px;" width="13" height="13" viewBox="14 403 13 13"><rect x="18" y="407" width="8" height="8" fill="none" stroke="#9a9a9a" stroke-width="1"/><rect x="19.5" y="408.5" width="5" height="5" fill="#b8b8b8" stroke="#111" stroke-width="2"/><rect x="14.5" y="403.5" width="8" height="8" fill="#222" stroke="#9a9a9a" stroke-width="1"/><rect x="16" y="405" width="5" height="5" fill="#fff"/><path d="M16 410L21 405" stroke="#ff0000" stroke-width="1.2"/></svg>
<div style="left:19px;top:425px;width:18px;height:16px;background:#3a3a3a;border-radius:3px;"></div>
<svg style="left:23px;top:428px;" width="10" height="10" viewBox="23 428 10 10"><rect x="24.2" y="429.5" width="7.6" height="7.2" fill="#484848" stroke="#c6c6c6" stroke-width="1.1"/></svg>
<svg style="left:46px;top:428px;" width="10" height="11" viewBox="46 428 10 11"><path d="M47 429H55V431.8H54V430.2H52.2V437H53.4V438.1H48.6V437H49.8V430.2H48V431.8H47Z" fill="#c6c6c6"/></svg>
<div style="left:14px;top:451px;width:12px;height:12px;background:#000;border:1px solid #8f8f8f;"></div>
<svg style="left:34px;top:451px;" width="12" height="12" viewBox="0 0 12 12"><defs><linearGradient id="h1" x1="0" y1="0" x2="1" y2="0"><stop offset="0" stop-color="#cfcfcf"/><stop offset="1" stop-color="#4a4a4a"/></linearGradient><linearGradient id="h2" x1="0" y1="0" x2="0" y2="1"><stop offset="0" stop-color="#585858"/><stop offset="0.45" stop-color="#7a7a7a"/><stop offset="1" stop-color="#cacaca"/></linearGradient><linearGradient id="h3" x1="0" y1="0" x2="1" y2="0"><stop offset="0" stop-color="#ffffff"/><stop offset="1" stop-color="#000000"/></linearGradient></defs><rect x="0.5" y="0.5" width="11" height="11" fill="url(#h3)" stroke="#8f8f8f" stroke-width="1"/></svg>
<div style="left:51px;top:449px;width:18px;height:17px;background:#3a3a3a;border-radius:3px;"></div>
<div style="left:54px;top:451px;width:12px;height:12px;background:#fff;border:1px solid #cfcfcf;"></div>
<svg style="left:54px;top:451px;" width="12" height="12" viewBox="0 0 12 12"><path d="M1.2 10.8L10.8 1.2" stroke="#ff0000" stroke-width="1.5"/></svg>
<svg style="left:18px;top:478px;" width="16" height="12" viewBox="18 478 16 12"><rect x="23.3" y="483" width="9" height="5.8" fill="#c6c6c6"/><path d="M22.3 479V482.8M25.3 479V481.6M28.7 479V481.6M31.7 479V481.6" stroke="#c6c6c6" stroke-width="0.9"/><path d="M19 482.3H22.8M19 485.3H21.7M19 488.1H21.7" stroke="#c6c6c6" stroke-width="0.9"/></svg>
<svg style="left:35px;top:491px;" width="3" height="3" viewBox="0 0 3 3"><path d="M3 0V3H0Z" fill="#c6c6c6"/></svg>
<div style="left:11px;top:500px;width:28px;height:22px;background:#2d2d2d;border-radius:3px;"></div>
<svg style="left:19px;top:505px;" width="14" height="13" viewBox="19 505 14 13"><rect x="20.6" y="506.8" width="9.8" height="9.6" fill="none" stroke="#c6c6c6" stroke-width="1.2"/><path d="M20 507H31" stroke="#c6c6c6" stroke-width="1.6"/><rect x="22.6" y="510" width="3.8" height="2.6" fill="#0a0a0a" stroke="#c6c6c6" stroke-width="0.9"/><rect x="24.8" y="511.8" width="3.8" height="2.8" fill="#2d2d2d" stroke="#c6c6c6" stroke-width="0.9"/></svg>
<svg style="left:49px;top:505px;" width="14" height="13" viewBox="49 505 14 13"><rect x="50.6" y="506.8" width="9.8" height="9.6" fill="#6b6b6b" stroke="#c6c6c6" stroke-width="1.2"/><rect x="50" y="506.2" width="11" height="2.8" fill="#c6c6c6"/></svg>
<svg style="left:65px;top:518px;" width="3" height="3" viewBox="0 0 3 3"><path d="M3 0V3H0Z" fill="#c6c6c6"/></svg>
<div style="left:543px;top:58px;width:253px;height:466px;background:#535353;"></div>
<div style="left:543px;top:58px;width:253px;height:11px;background:#424242;"></div>
<div style="left:543px;top:69px;width:253px;height:1px;background:#3a3a3a;"></div>
<div style="left:543px;top:70px;width:253px;height:27px;background:#424242;"></div>
<div style="left:543px;top:96px;width:253px;height:1px;background:#3a3a3a;"></div>
<div style="left:543px;top:70px;width:51px;height:27px;background:#535353;"></div>
<div style="left:594px;top:70px;width:1px;height:26px;background:#3a3a3a;"></div>
<div style="left:644px;top:70px;width:1px;height:26px;background:#3a3a3a;"></div>
<div style="left:742px;top:70px;width:1px;height:26px;background:#3a3a3a;"></div>
<svg style="left:782px;top:61px;" width="8" height="5" viewBox="0 0 8 5"><path d="M0 0L3.5 2.5L0 5L0.8 2.5ZM4 0L7.5 2.5L4 5L4.8 2.5Z" fill="#d8d8d8"/></svg>
<div style="left:795px;top:58px;width:1px;height:467px;background:#3d3d3d;"></div>
<div class="t" style="left:557px;top:76px;font-size:12.5px;line-height:18px;height:18px;color:#f0f0f0;will-change:transform;">属性</div>
<div class="t" style="left:607.5px;top:76px;font-size:12.5px;line-height:18px;height:18px;color:#a8a8a8;will-change:transform;">页面</div>
<div class="t" style="left:658.5px;top:76px;font-size:13px;line-height:18px;height:18px;color:#a8a8a8;will-change:transform;">CC Libraries</div>
<div style="left:783px;top:98px;width:12px;height:411px;background:#4a4a4a;"></div>
<div style="left:784px;top:110px;width:10px;height:309px;background:#6b6b6b;border-radius:5px;"></div>
<svg style="left:784px;top:101px;" width="9" height="6" viewBox="0 0 9 6"><path d="M0.5 4.5L4.5 0.8L8.5 4.5" fill="none" stroke="#8a8a8a" stroke-width="1"/></svg>
<svg style="left:784px;top:500.5px;" width="9" height="6" viewBox="0 0 9 6"><path d="M0.5 1L4.5 4.7L8.5 1" fill="none" stroke="#8a8a8a" stroke-width="1"/></svg>
<div style="left:543px;top:130px;width:240px;height:1px;background:#4a4a4a;"></div>
<div style="left:543px;top:394px;width:240px;height:1px;background:#4a4a4a;"></div>
<div style="left:543px;top:483px;width:240px;height:1px;background:#4a4a4a;"></div>
<div class="t" style="left:553px;top:108px;font-size:12px;line-height:16px;height:16px;color:#e2e2e2;">未选择对象</div>
<div class="t" style="left:553px;top:142px;font-size:12px;line-height:16px;height:16px;color:#e2e2e2;">文档</div>
<div class="t" style="left:553px;top:254px;font-size:12px;line-height:16px;height:16px;color:#e2e2e2;">边距</div>
<div class="t" style="left:553px;top:342px;font-size:12px;line-height:16px;height:16px;color:#e2e2e2;">方向:</div>
<div class="t" style="left:553px;top:405px;font-size:12px;line-height:16px;height:16px;color:#e2e2e2;">页面</div>
<div class="t" style="left:553px;top:500px;font-size:12px;line-height:16px;height:16px;color:#e2e2e2;">标尺和网格</div>
<div class="t" style="left:559px;top:200px;font-size:12px;line-height:16px;height:16px;color:#e2e2e2;">宽</div>
<div class="t" style="left:559px;top:226px;font-size:12px;line-height:16px;height:16px;color:#e2e2e2;">高</div>
<div class="t" style="left:692px;top:228px;font-size:12px;line-height:16px;height:16px;color:#e2e2e2;">对页</div>
<div style="left:553px;top:164px;width:94px;height:21px;background:#454545;border:1px solid #6e6e6e;border-radius:3px;overflow:hidden;"></div>
<div class="t" style="left:558px;top:168px;font-size:12.8px;line-height:16px;height:16px;color:#ececec;word-spacing:-0.4px;">600 x 300</div>
<svg style="left:633px;top:172px;" width="9" height="5" viewBox="0 0 9 5"><path d="M1 0.8L4.5 4.2L8 0.8" fill="none" stroke="#d0d0d0" stroke-width="1.1"/></svg>
<div style="left:674px;top:164px;width:22px;height:22px;background:#2d2d2d;border-radius:3px;"></div>
<div style="left:749px;top:164px;width:22px;height:22px;background:#2d2d2d;border-radius:3px;"></div>
<svg style="left:670px;top:160px;" width="105" height="30" viewBox="670 160 105 30"><path d="M678.9 167.2H689.8V182.6L678.9 180.8Z" fill="#c9c9c9"/><path d="M689.8 167.7H691.3V181.2H689.8" fill="none" stroke="#c9c9c9" stroke-width="1"/><text x="684.3" y="178.5" font-size="10.5" text-anchor="middle" font-family="Liberation Sans, sans-serif" fill="#2d2d2d">A</text><path d="M705.5 167.7H703.5V180.7H705.5" fill="none" stroke="#bdbdbd" stroke-width="1"/><path d="M705.7 167.2H715.9V181L705.7 182.6Z" fill="#bdbdbd"/><path d="M710.8 169.6V179.8M708 173.8H713.6M708.6 177.4L710.8 175L713 177.4M709.4 171.2L710.8 169.6L712.2 171.2M709.4 178.4L710.8 180L712.2 178.4" fill="none" stroke="#4a4a4a" stroke-width="0.9"/><rect x="728.3" y="167.3" width="13.2" height="15.4" fill="none" stroke="#c9c9c9" stroke-width="1.1"/><circle cx="734.8" cy="170.9" r="2" fill="#c9c9c9"/><path d="M731 182.2V175.6Q731 174.2 732.4 174.2H737.4Q738.8 174.2 738.8 175.6V182.2Z" fill="#c9c9c9"/><rect x="753.4" y="167.3" width="12.2" height="15.4" fill="none" stroke="#c9c9c9" stroke-width="1.1"/><circle cx="756.7" cy="175.1" r="1.8" fill="#c9c9c9"/><path d="M765.4 171.2H761Q759.5 171.2 759.5 172.7V177.5Q759.5 179 761 179H765.4Z" fill="#c9c9c9"/></svg>
<div style="left:573px;top:197px;width:74px;height:21px;background:#454545;border:1px solid #6e6e6e;border-radius:3px;overflow:hidden;"></div><div style="left:591px;top:198px;width:1px;height:19px;background:#6e6e6e;"></div><svg style="left:578px;top:200.5px;" width="9" height="5" viewBox="0 0 9 5"><path d="M0.7 4.4L4.5 0.8L8.3 4.4" fill="none" stroke="#c8c8c8" stroke-width="1"/></svg><svg style="left:578px;top:210.5px;" width="9" height="5" viewBox="0 0 9 5"><path d="M0.7 0.6L4.5 4.2L8.3 0.6" fill="none" stroke="#c8c8c8" stroke-width="1"/></svg><div class="t" style="left:596px;top:201px;width:48.5px;height:16px;overflow:hidden;font-size:12.8px;line-height:16px;color:#ececec;word-spacing:1px;letter-spacing:0px;">600 px</div>
<div style="left:573px;top:223px;width:74px;height:21px;background:#454545;border:1px solid #6e6e6e;border-radius:3px;overflow:hidden;"></div><div style="left:591px;top:224px;width:1px;height:19px;background:#6e6e6e;"></div><svg style="left:578px;top:226.5px;" width="9" height="5" viewBox="0 0 9 5"><path d="M0.7 4.4L4.5 0.8L8.3 4.4" fill="none" stroke="#c8c8c8" stroke-width="1"/></svg><svg style="left:578px;top:236.5px;" width="9" height="5" viewBox="0 0 9 5"><path d="M0.7 0.6L4.5 4.2L8.3 0.6" fill="none" stroke="#c8c8c8" stroke-width="1"/></svg><div class="t" style="left:596px;top:227px;width:48.5px;height:16px;overflow:hidden;font-size:12.8px;line-height:16px;color:#ececec;word-spacing:1px;letter-spacing:0px;">300 px</div>
<svg style="left:675px;top:198px;" width="20" height="21" viewBox="675 198 20 21"><path d="M679.7 202.2H683.4V215H676V205.9H679.7Z" fill="#cfcfcf"/><path d="M679.3 202.8V205.5H676.6Z" fill="#cfcfcf"/><path d="M689.3 202.2H685.6V215H693V205.9H689.3Z" fill="#cfcfcf"/><path d="M689.7 202.8V205.5H692.4Z" fill="#cfcfcf"/><path d="M684.5 199V217.6" stroke="#cfcfcf" stroke-width="1"/></svg>
<div style="left:698px;top:197px;width:69px;height:21px;background:#454545;border:1px solid #6e6e6e;border-radius:3px;overflow:hidden;"></div>
<div class="t" style="left:703px;top:201px;font-size:12.8px;line-height:16px;height:16px;color:#ececec;">1</div>
<div style="left:674px;top:228px;width:12px;height:12px;border:1px solid #bdbdbd;border-radius:2px;"></div>
<svg style="left:553px;top:277px;" width="18" height="18" viewBox="0 0 18 18"><rect x="1" y="1" width="16" height="5" fill="#cfcfcf"/><rect x="1.5" y="8.5" width="15" height="8" fill="none" stroke="#cfcfcf" stroke-width="1"/></svg>
<svg style="left:553px;top:303px;" width="18" height="18" viewBox="0 0 18 18"><rect x="1.5" y="1.5" width="15" height="8" fill="none" stroke="#cfcfcf" stroke-width="1"/><rect x="1" y="12" width="16" height="5" fill="#cfcfcf"/></svg>
<div style="left:573px;top:276px;width:74px;height:21px;background:#454545;border:1px solid #6e6e6e;border-radius:3px;overflow:hidden;"></div><div style="left:591px;top:277px;width:1px;height:19px;background:#6e6e6e;"></div><svg style="left:578px;top:279.5px;" width="9" height="5" viewBox="0 0 9 5"><path d="M0.7 4.4L4.5 0.8L8.3 4.4" fill="none" stroke="#c8c8c8" stroke-width="1"/></svg><svg style="left:578px;top:289.5px;" width="9" height="5" viewBox="0 0 9 5"><path d="M0.7 0.6L4.5 4.2L8.3 0.6" fill="none" stroke="#c8c8c8" stroke-width="1"/></svg><div class="t" style="left:596px;top:280px;width:48.5px;height:16px;overflow:hidden;font-size:12.8px;line-height:16px;color:#ececec;word-spacing:2.3px;letter-spacing:-0.35px;">56.693 px</div>
<div style="left:573px;top:302px;width:74px;height:21px;background:#454545;border:1px solid #6e6e6e;border-radius:3px;overflow:hidden;"></div><div style="left:591px;top:303px;width:1px;height:19px;background:#6e6e6e;"></div><svg style="left:578px;top:305.5px;" width="9" height="5" viewBox="0 0 9 5"><path d="M0.7 4.4L4.5 0.8L8.3 4.4" fill="none" stroke="#c8c8c8" stroke-width="1"/></svg><svg style="left:578px;top:315.5px;" width="9" height="5" viewBox="0 0 9 5"><path d="M0.7 0.6L4.5 4.2L8.3 0.6" fill="none" stroke="#c8c8c8" stroke-width="1"/></svg><div class="t" style="left:596px;top:306px;width:48.5px;height:16px;overflow:hidden;font-size:12.8px;line-height:16px;color:#ececec;word-spacing:2.3px;letter-spacing:-0.35px;">56.693 px</div>
<div style="left:652px;top:287px;width:22px;height:22px;background:#2d2d2d;border-radius:3px;"></div>
<svg style="left:656px;top:289px;" width="14" height="18" viewBox="656 289 14 18"><path d="M660.5 296V294.2A2.5 2.5 0 0 1 665.5 294.2V295.8A2.5 2.5 0 0 1 663 298.3" fill="none" stroke="#cfcfcf" stroke-width="1.5" stroke-linecap="round"/><path d="M665.5 299.4V301.2A2.5 2.5 0 0 1 660.5 301.2V299.6A2.5 2.5 0 0 1 663 297.1" fill="none" stroke="#cfcfcf" stroke-width="1.5" stroke-linecap="round"/></svg>
<svg style="left:679px;top:277px;" width="18" height="18" viewBox="0 0 18 18"><rect x="1" y="1" width="5" height="16" fill="#cfcfcf"/><rect x="8.5" y="1.5" width="8" height="15" fill="none" stroke="#cfcfcf" stroke-width="1"/></svg>
<svg style="left:679px;top:303px;" width="18" height="18" viewBox="0 0 18 18"><rect x="1.5" y="1.5" width="8" height="15" fill="none" stroke="#cfcfcf" stroke-width="1"/><rect x="12" y="1" width="5" height="16" fill="#cfcfcf"/></svg>
<div style="left:699px;top:276px;width:74px;height:21px;background:#454545;border:1px solid #6e6e6e;border-radius:3px;overflow:hidden;"></div><div style="left:717px;top:277px;width:1px;height:19px;background:#6e6e6e;"></div><svg style="left:704px;top:279.5px;" width="9" height="5" viewBox="0 0 9 5"><path d="M0.7 4.4L4.5 0.8L8.3 4.4" fill="none" stroke="#c8c8c8" stroke-width="1"/></svg><svg style="left:704px;top:289.5px;" width="9" height="5" viewBox="0 0 9 5"><path d="M0.7 0.6L4.5 4.2L8.3 0.6" fill="none" stroke="#c8c8c8" stroke-width="1"/></svg><div class="t" style="left:722px;top:280px;width:48.5px;height:16px;overflow:hidden;font-size:12.8px;line-height:16px;color:#ececec;word-spacing:2.3px;letter-spacing:-0.35px;">56.693 px</div>
<div style="left:699px;top:302px;width:74px;height:21px;background:#454545;border:1px solid #6e6e6e;border-radius:3px;overflow:hidden;"></div><div style="left:717px;top:303px;width:1px;height:19px;background:#6e6e6e;"></div><svg style="left:704px;top:305.5px;" width="9" height="5" viewBox="0 0 9 5"><path d="M0.7 4.4L4.5 0.8L8.3 4.4" fill="none" stroke="#c8c8c8" stroke-width="1"/></svg><svg style="left:704px;top:315.5px;" width="9" height="5" viewBox="0 0 9 5"><path d="M0.7 0.6L4.5 4.2L8.3 0.6" fill="none" stroke="#c8c8c8" stroke-width="1"/></svg><div class="t" style="left:722px;top:306px;width:48.5px;height:16px;overflow:hidden;font-size:12.8px;line-height:16px;color:#ececec;word-spacing:2.3px;letter-spacing:-0.35px;">56.693 px</div>
<div style="left:653px;top:338px;width:120px;height:20px;background:#454545;border:1px solid #6e6e6e;border-radius:3px;overflow:hidden;"></div>
<div class="t" style="left:658px;top:341px;font-size:12px;line-height:17px;height:17px;color:#ececec;">水平</div>
<svg style="left:759px;top:346px;" width="9" height="5" viewBox="0 0 9 5"><path d="M1 0.8L4.5 4.2L8 0.8" fill="none" stroke="#d0d0d0" stroke-width="1.1"/></svg>
<div style="left:553px;top:368px;width:220px;height:20px;border:1px solid #6e6e6e;border-radius:3px;"></div>
<div class="t" style="left:553px;top:372px;font-size:12px;line-height:16px;height:16px;color:#ececec;width:220px;text-align:center;">调整版面</div>
<div style="left:553px;top:456px;width:220px;height:21px;border:1px solid #6e6e6e;border-radius:3px;"></div>
<div class="t" style="left:553px;top:461px;font-size:12px;line-height:16px;height:16px;color:#ececec;width:220px;text-align:center;">编辑页面</div>
<div style="left:553px;top:427px;width:94px;height:21px;background:#454545;border:1px solid #6e6e6e;border-radius:3px;overflow:hidden;"></div>
<div style="left:628px;top:428px;width:1px;height:19px;background:#6e6e6e;"></div>
<div class="t" style="left:557px;top:431px;font-size:12.8px;line-height:16px;height:16px;color:#ececec;">1</div>
<svg style="left:633px;top:435px;" width="9" height="5" viewBox="0 0 9 5"><path d="M1 0.8L4.5 4.2L8 0.8" fill="none" stroke="#d0d0d0" stroke-width="1.1"/></svg>
<svg style="left:725px;top:434px;" width="12" height="12" viewBox="0 0 12 12"><rect x="1.3" y="0.6" width="10.2" height="10.2" fill="none" stroke="#d6d6d6" stroke-width="1.1"/><path d="M6.4 3.2V8.2M3.9 5.7H8.9" stroke="#d6d6d6" stroke-width="1.1"/></svg>
<svg style="left:752.7px;top:432px;" width="12" height="14" viewBox="0 0 12 14"><path d="M0.5 3H11.5M4 2.5V1H8V2.5" fill="none" stroke="#939393" stroke-width="1.2"/><path d="M1.5 3.5L2.2 13H9.8L10.5 3.5" fill="none" stroke="#939393" stroke-width="1.2"/><path d="M4.2 5V11.5M6 5V11.5M7.8 5V11.5" stroke="#939393" stroke-width="0.9"/></svg>
<div style="left:674px;top:494px;width:22px;height:22px;background:#2d2d2d;border-radius:3px;"></div>
<svg style="left:677px;top:497px;" width="16" height="16" viewBox="0 0 16 16"><path d="M0 0H16V4.5H4.5V16H0Z" fill="#d0d0d0"/><g fill="#2d2d2d"><rect x="6" y="1.7" width="1.3" height="1.3"/><rect x="9" y="1.7" width="1.3" height="1.3"/><rect x="12" y="1.7" width="1.3" height="1.3"/><rect x="1.7" y="6" width="1.3" height="1.3"/><rect x="1.7" y="9" width="1.3" height="1.3"/><rect x="1.7" y="12" width="1.3" height="1.3"/></g></svg>
<svg style="left:702px;top:497px;" width="16" height="16" viewBox="0 0 16 16"><rect x="0.5" y="0.5" width="15" height="15" fill="none" stroke="#cfcfcf" stroke-width="1"/><path d="M0 4.5H16M0 8.5H16M0 12.5H16" stroke="#cfcfcf" stroke-width="1"/><path d="M3.5 0V16M12.5 0V16" stroke="#cfcfcf" stroke-width="1"/></svg>
<svg style="left:727px;top:497px;" width="16" height="16" viewBox="0 0 16 16"><rect x="0.5" y="0.5" width="15" height="15" fill="none" stroke="#cfcfcf" stroke-width="1"/><path d="M0 5.5H16M0 10.5H16M5.5 0V16M10.5 0V16" stroke="#cfcfcf" stroke-width="1"/></svg>
<svg style="left:752px;top:497px;" width="17" height="16" viewBox="0 0 17 16"><rect x="1.5" y="0.5" width="3" height="15" fill="none" stroke="#cfcfcf" stroke-width="1"/><path d="M1 3.5H5" stroke="#cfcfcf" stroke-width="1"/><path d="M1 6.5H5" stroke="#cfcfcf" stroke-width="1"/><path d="M1 9.5H5" stroke="#cfcfcf" stroke-width="1"/><path d="M1 12.5H5" stroke="#cfcfcf" stroke-width="1"/><rect x="7.5" y="0.5" width="3" height="15" fill="none" stroke="#cfcfcf" stroke-width="1"/><path d="M7 3.5H11" stroke="#cfcfcf" stroke-width="1"/><path d="M7 6.5H11" stroke="#cfcfcf" stroke-width="1"/><path d="M7 9.5H11" stroke="#cfcfcf" stroke-width="1"/><path d="M7 12.5H11" stroke="#cfcfcf" stroke-width="1"/><rect x="13.5" y="0.5" width="3" height="15" fill="none" stroke="#cfcfcf" stroke-width="1"/><path d="M13 3.5H17" stroke="#cfcfcf" stroke-width="1"/><path d="M13 6.5H17" stroke="#cfcfcf" stroke-width="1"/><path d="M13 9.5H17" stroke="#cfcfcf" stroke-width="1"/><path d="M13 12.5H17" stroke="#cfcfcf" stroke-width="1"/></svg>
<div style="left:543px;top:524px;width:253px;height:1px;background:#3a3a3a;"></div>
<svg style="left:575.3px;top:97px;" width="14" height="22" viewBox="0 0 14 22"><path d="M1 1V17.5L5 13.8L7.8 20L10.5 18.8L7.8 12.8H13Z" fill="#fff" stroke="#1a1a1a" stroke-width="1" stroke-linejoin="round"/></svg>
<svg style="left:0px;top:0px;" width="4" height="4" viewBox="0 0 4 4"><path d="M0 0h3v1h-1v1h-1v1h-1z" fill="#fff"/></svg>
<svg style="left:796px;top:0px;" width="4" height="4" viewBox="0 0 4 4"><path d="M4 0h-3v1h1v1h1v1h1z" fill="#fff"/></svg>
</div>
</body>
</html>
